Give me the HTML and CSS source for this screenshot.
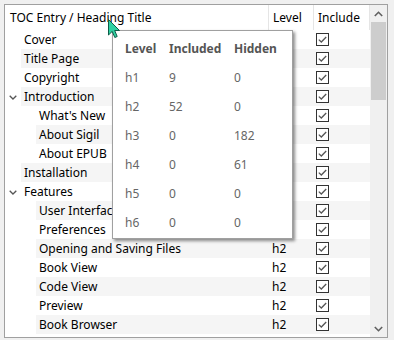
FILE: index.html
```html
<!DOCTYPE html>
<html lang="en">
<head>
  <meta charset="UTF-8">
  <title>Table of Contents</title>
  <link rel="stylesheet" href="styles.css">
</head>
<body>
  <div class="toc-view">
    <div class="tree">
      <!-- Header -->
      <div class="header">
        <span class="h-name">TOC Entry / Heading Title</span>
        <span class="h-level">Level</span>
        <span class="h-inc">Include</span>
        <span class="h-end"></span>
      </div>

      <div class="rows" id="rows"></div>
    </div>

    <!-- Scrollbar -->
    <div class="scrollbar">
      <div class="sb-btn">
        <svg width="9" height="6" viewBox="0 0 9 6"><polyline points="0.8,5 4.5,1.3 8.2,5" fill="none" stroke="#606060" stroke-width="1.6"/></svg>
      </div>
      <div class="sb-thumb"></div>
      <div class="sb-track"></div>
      <div class="sb-btn">
        <svg width="9" height="6" viewBox="0 0 9 6"><polyline points="0.8,1 4.5,4.7 8.2,1" fill="none" stroke="#606060" stroke-width="1.6"/></svg>
      </div>
    </div>

    <!-- Heading count popup -->
    <div class="popup">
      <div class="p-row p-head"><span>Level</span><span>Included</span><span>Hidden</span></div>
      <div class="p-row"><span>h1</span><span>9</span><span>0</span></div>
      <div class="p-row"><span>h2</span><span>52</span><span>0</span></div>
      <div class="p-row"><span>h3</span><span>0</span><span>182</span></div>
      <div class="p-row"><span>h4</span><span>0</span><span>61</span></div>
      <div class="p-row"><span>h5</span><span>0</span><span>0</span></div>
      <div class="p-row"><span>h6</span><span>0</span><span>0</span></div>
    </div>

    <svg class="cursor" width="13" height="20" viewBox="0 0 13 20">
      <polygon points="0.5,0.5 0.5,16 4.2,12.4 6.8,18.5 9.2,17.5 6.7,11.5 11.5,11.5" fill="#2fd1a2" stroke="#0d5c48" stroke-width="1"/>
    </svg>
  </div>

  <script>
    // Tree entries: [title, depth, level, expandable]
    const entries = [
      ['Cover', 1, 'h1', false],
      ['Title Page', 1, 'h1', false],
      ['Copyright', 1, 'h1', false],
      ['Introduction', 1, 'h1', true],
      ["What's New", 2, 'h2', false],
      ['About Sigil', 2, 'h2', false],
      ['About EPUB', 2, 'h2', false],
      ['Installation', 1, 'h1', false],
      ['Features', 1, 'h1', true],
      ['User Interface', 2, 'h2', false],
      ['Preferences', 2, 'h2', false],
      ['Opening and Saving Files', 2, 'h2', false],
      ['Book View', 2, 'h2', false],
      ['Code View', 2, 'h2', false],
      ['Preview', 2, 'h2', false],
      ['Book Browser', 2, 'h2', false],
      // only the top of this row peeks out under the fold
      ['', 2, '', false]
    ];

    const checkbox = `<svg width="13" height="13" viewBox="0 0 13 13">
      <rect x="0.5" y="0.5" width="12" height="12" fill="#fff" stroke="#333"/>
      <polyline points="2.8,6.6 5.3,9 10.2,4" fill="none" stroke="#555" stroke-width="1.3"/>
    </svg>`;

    const chevron = `<svg width="8" height="5" viewBox="0 0 8 5">
      <polyline points="0.7,0.7 4,4 7.3,0.7" fill="none" stroke="#555" stroke-width="1.3"/>
    </svg>`;

    document.getElementById('rows').innerHTML = entries
      .map(([title, depth, level, open], i) => `
        <div class="row d${depth}${i % 2 ? ' alt' : ''}">
          <span class="branch">${open ? chevron : ''}</span>
          <div class="cells">
            <span class="name">${title}</span>
            <span class="level">${level}</span>
            <span class="inc">${checkbox}</span>
          </div>
        </div>`)
      .join('');
  </script>
</body>
</html>
```

FILE: styles.css
```css
/* General Styles */
body {
  margin: 0;
  padding: 4px;
  background: #f0f0f0;
  font-family: "Noto Sans", "Open Sans", sans-serif;
  font-size: 12px;
  color: #000;
}

.toc-view {
  position: relative;
  display: flex;
  width: 382px;
  height: 332px;
  border: 1px solid #a0a0a0;
  background: #fff;
  overflow: hidden;
}

.tree {
  width: 365px;
  overflow: hidden;
}

/* Header */
.header {
  display: flex;
  height: 25px;
  align-items: stretch;
  line-height: 25px;
}

.header span {
  padding-left: 4px;
  border-right: 1px solid #e5e5e5;
}

.h-name {
  flex: 1;
  padding-left: 5px !important;
}

.h-level {
  width: 40px;
}

.h-inc {
  width: 51px;
}

.h-end {
  width: 0;
  padding: 0 !important;
  border: none !important;
}

/* Rows */
.row {
  display: flex;
  height: 19px;
  line-height: 19px;
}

.branch {
  display: flex;
  align-items: center;
  justify-content: center;
  padding-top: 1px;
}

.d1 .branch {
  width: 16px;
}

.d2 .branch {
  width: 31px;
}

.cells {
  flex: 1;
  display: flex;
}

.alt .cells {
  background: #f5f5f5;
}

.name {
  flex: 1;
  padding-left: 3px;
  white-space: nowrap;
  overflow: hidden;
}

.level {
  width: 41px;
  padding-left: 4px;
}

.inc {
  width: 54px;
  padding-left: 3px;
  display: flex;
  align-items: center;
}

.inc svg {
  display: block;
}

/* Scrollbar */
.scrollbar {
  width: 17px;
  display: flex;
  flex-direction: column;
  background: #f0f0f0;
}

.sb-btn {
  height: 17px;
  display: flex;
  align-items: center;
  justify-content: center;
}

.sb-thumb {
  height: 78px;
  margin: 0 1px;
  background: #cdcdcd;
}

.sb-track {
  flex: 1;
}

/* Popup */
.popup {
  position: absolute;
  left: 107px;
  top: 25px;
  width: 167px;
  padding: 3px 0 0 12px;
  height: 204px;
  background: #fff;
  border: 1px solid #a0a0a0;
  box-shadow: 2px 2px 3px rgba(0, 0, 0, 0.45);
}

.p-row {
  display: grid;
  grid-template-columns: 44px 65px auto;
  height: 29px;
  line-height: 29px;
  color: #666;
}

.p-head {
  font-weight: bold;
  color: #555;
}

.cursor {
  position: absolute;
  left: 103px;
  top: 14px;
}
```
